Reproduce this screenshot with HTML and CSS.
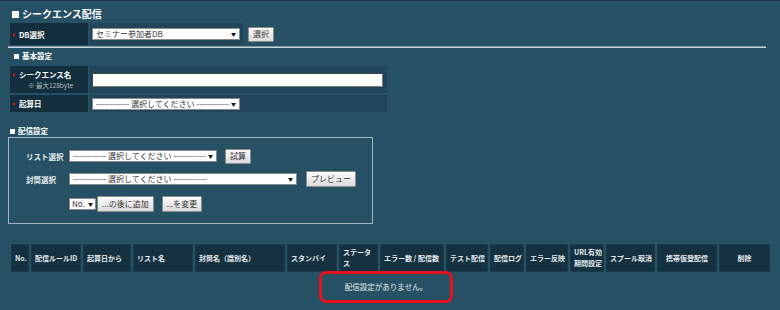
FILE: index.html
```html
<!DOCTYPE html>
<html lang="ja">
<head>
    <meta charset="UTF-8">
    <meta name="viewport" content="width=device-width, initial-scale=1.0">
    <title>シークエンス配信</title>
    <link rel="stylesheet" href="styles.css">
</head>
<body>
    <div class="page">
        <h2 class="title">シークエンス配信</h2>

        <table class="form">
            <tr>
                <th>DB選択</th>
                <td class="val val-db">
                    <span class="sel sel-db">
                        <select><option>セミナー参加者DB</option></select>
                    </span>
                </td>
                <td class="plain"><button>選択</button></td>
            </tr>
        </table>

        <hr class="rule">

        <h3 class="sub sub-basic">基本設定</h3>

        <table class="form">
            <tr class="row-name">
                <th>シークエンス名<div class="note">※ 最大128byte</div></th>
                <td class="val val-wide"><input type="text" class="text-input"></td>
            </tr>
            <tr class="row-date">
                <th>起算日</th>
                <td class="val val-wide">
                    <span class="sel sel-db">
                        <select><option>------------ 選択してください ------------</option></select>
                    </span>
                </td>
            </tr>
        </table>

        <h3 class="sub sub-delivery">配信設定</h3>

        <div class="box">
            <div class="box-row">
                <span class="box-label">リスト選択</span>
                <span class="sel sel-list">
                    <select><option>------------ 選択してください ------------</option></select>
                </span>
                <button class="btn-gap">試算</button>
            </div>
            <div class="box-row">
                <span class="box-label">封筒選択</span>
                <span class="sel sel-envelope">
                    <select><option>------------ 選択してください ------------</option></select>
                </span>
                <button class="btn-gap btn-tall">プレビュー</button>
            </div>
            <div class="box-row box-row-last">
                <span class="box-label"></span>
                <span class="sel sel-no">
                    <select><option>No.</option></select>
                </span>
                <button class="btn-tall">...の後に追加</button>
                <button class="btn-gap btn-tall">...を変更</button>
            </div>
        </div>

        <table class="rules">
            <tr>
                <th class="w-no">No.</th>
                <th class="w-id">配信ルールID</th>
                <th class="w-start">起算日から</th>
                <th class="w-list">リスト名</th>
                <th class="w-env">封筒名（識別名）</th>
                <th class="w-stand">スタンバイ</th>
                <th class="w-status">ステータ<br>ス</th>
                <th class="w-err">エラー数 / 配信数</th>
                <th class="w-test">テスト配信</th>
                <th class="w-log">配信ログ</th>
                <th class="w-reflect">エラー反映</th>
                <th class="w-url">URL有効<br>期間設定</th>
                <th class="w-spool">スプール取消</th>
                <th class="w-mobile c">携帯仮登配信</th>
                <th class="w-del c">削除</th>
            </tr>
            <tr>
                <td colspan="15" class="empty">
                    <div class="alert">配信設定がありません。</div>
                </td>
            </tr>
        </table>
    </div>
</body>
</html>
```

FILE: styles.css
```css
* {
    box-sizing: border-box;
}

body {
    margin: 0;
    background-color: #265064;
    border-top: 1px solid #183646;
    color: #fff;
    font-family: "Noto Sans CJK JP", "Noto Sans", sans-serif;
    font-size: 7.5px;
}

.page {
    padding: 0 8px;
}

/* 見出し */
.title {
    display: flex;
    align-items: center;
    gap: 3px;
    margin: 6px 0 0 4px;
    font-size: 10px;
    line-height: 14px;
    font-weight: bold;
}

.title::before {
    content: "";
    width: 7px;
    height: 7px;
    background-color: #fff;
}

.sub {
    display: flex;
    align-items: center;
    gap: 3px;
    margin: 3px 0 3px 6px;
    font-size: 7.5px;
    line-height: 10px;
    font-weight: bold;
}

.sub::before {
    content: "";
    width: 5px;
    height: 5px;
    background-color: #fff;
}

.sub-delivery {
    margin: 12px 0 1px 2px;
}

.rule {
    margin: -1px 6px 0 0;
    height: 0;
    border: 0;
    border-top: 1px solid #7d97a5;
    border-bottom: 1px solid #c9d5db;
}

/* フォームテーブル */
.form {
    border-spacing: 2px;
}

.form th {
    width: 78px;
    height: 22px;
    padding: 0 0 0 2px;
    background-color: #132e3c;
    text-align: left;
    font-weight: bold;
    font-size: 7.5px;
    line-height: 11px;
}

.form th::before {
    content: "";
    display: inline-block;
    border-left: 3px solid #d8101a;
    border-top: 2.5px solid transparent;
    border-bottom: 2.5px solid transparent;
    margin: 0 3px 1px 1px;
    vertical-align: middle;
}

.note {
    padding-left: 16px;
    font-size: 6.5px;
    font-weight: normal;
    color: #b0bec5;
}

.row-name th {
    height: 27px;
}

.row-date th {
    height: 17px;
}

.val {
    padding: 0 2px;
    background-color: #21465a;
}

.val-db {
    width: 153px;
}

.val-wide {
    width: 297px;
}

.plain {
    padding: 0 0 0 3px;
}

.text-input {
    display: block;
    width: 291px;
    height: 14px;
    border: 1px solid #777;
    border-top-color: #444;
    border-left-color: #444;
    background-color: #fff;
}

/* セレクト */
.sel {
    position: relative;
    display: inline-block;
    vertical-align: middle;
}

.sel select {
    -webkit-appearance: none;
    appearance: none;
    display: block;
    width: 100%;
    height: 12px;
    padding: 0 10px 0 3px;
    border: 1px solid #8a8a8a;
    border-radius: 0;
    background-color: #fff;
    color: #333;
    font-family: "Noto Sans CJK JP", "Noto Sans", sans-serif;
    font-size: 8px;
    line-height: 10px;
}

.sel::after {
    content: "▼";
    position: absolute;
    right: 4px;
    top: 2px;
    font-size: 5px;
    line-height: 8px;
    color: #111;
    pointer-events: none;
}

.sel-db {
    width: 148px;
}

.sel-list {
    width: 148px;
}

.sel-envelope {
    width: 228px;
}

.sel-no {
    width: 27px;
    margin-right: 1px;
}

.sel-no select {
    padding: 0 0 0 2px;
}

.sel-no::after {
    right: 3px;
}

/* ボタン */
button {
    height: 15px;
    padding: 0 4px;
    border: 1px solid #8c8c8c;
    border-radius: 1px;
    background: linear-gradient(#fbfbfb, #dcdcdc);
    color: #333;
    font-family: "Noto Sans CJK JP", "Noto Sans", sans-serif;
    font-size: 8px;
    line-height: 12px;
    cursor: pointer;
}

.btn-tall {
    height: 16px;
}

/* 配信設定ボックス */
.box {
    width: 365px;
    height: 87px;
    padding: 10px 0 0 17px;
    border: 1px solid #a7b6be;
}

.box-row {
    display: flex;
    align-items: center;
    height: 16px;
    margin-bottom: 7px;
}

.box-row-last {
    margin-top: 9px;
}

.box-label {
    width: 43px;
    font-weight: bold;
    color: #e8eef0;
}

.btn-gap {
    margin-left: 8px;
}

.sel-envelope + .btn-gap {
    margin-left: 9px;
}

/* 一覧テーブル */
.rules {
    width: 763px;
    margin: 18px 0 0 1px;
    border-spacing: 2px;
    table-layout: fixed;
}

.rules th {
    height: 28px;
    padding: 0 0 0 3px;
    border: 1px solid #1a3a4a;
    background-color: #15313f;
    color: #e3eaee;
    text-align: left;
    font-size: 7px;
    font-weight: bold;
    line-height: 11px;
    white-space: nowrap;
    overflow: hidden;
}

.rules th.c {
    text-align: center;
    padding: 0;
}

.w-no { width: 18px; }
.w-id { width: 50px; }
.w-start { width: 48px; }
.w-list { width: 60px; }
.w-env { width: 90px; }
.w-stand { width: 50px; }
.w-status { width: 39px; }
.w-err { width: 64px; }
.w-test { width: 42px; }
.w-log { width: 34px; }
.w-reflect { width: 42px; }
.w-url { width: 34px; }
.w-spool { width: 49px; }
.w-mobile { width: 60px; }
.w-del { width: 51px; }

.empty {
    height: 29px;
    padding: 0 9px 0 0;
    vertical-align: top;
}

.alert {
    width: 134px;
    height: 32px;
    margin: -3px auto 0;
    border: 3px solid #e8101c;
    border-radius: 7px;
    color: #e2eaed;
    text-align: center;
    font-size: 7.5px;
    line-height: 26px;
}
```
